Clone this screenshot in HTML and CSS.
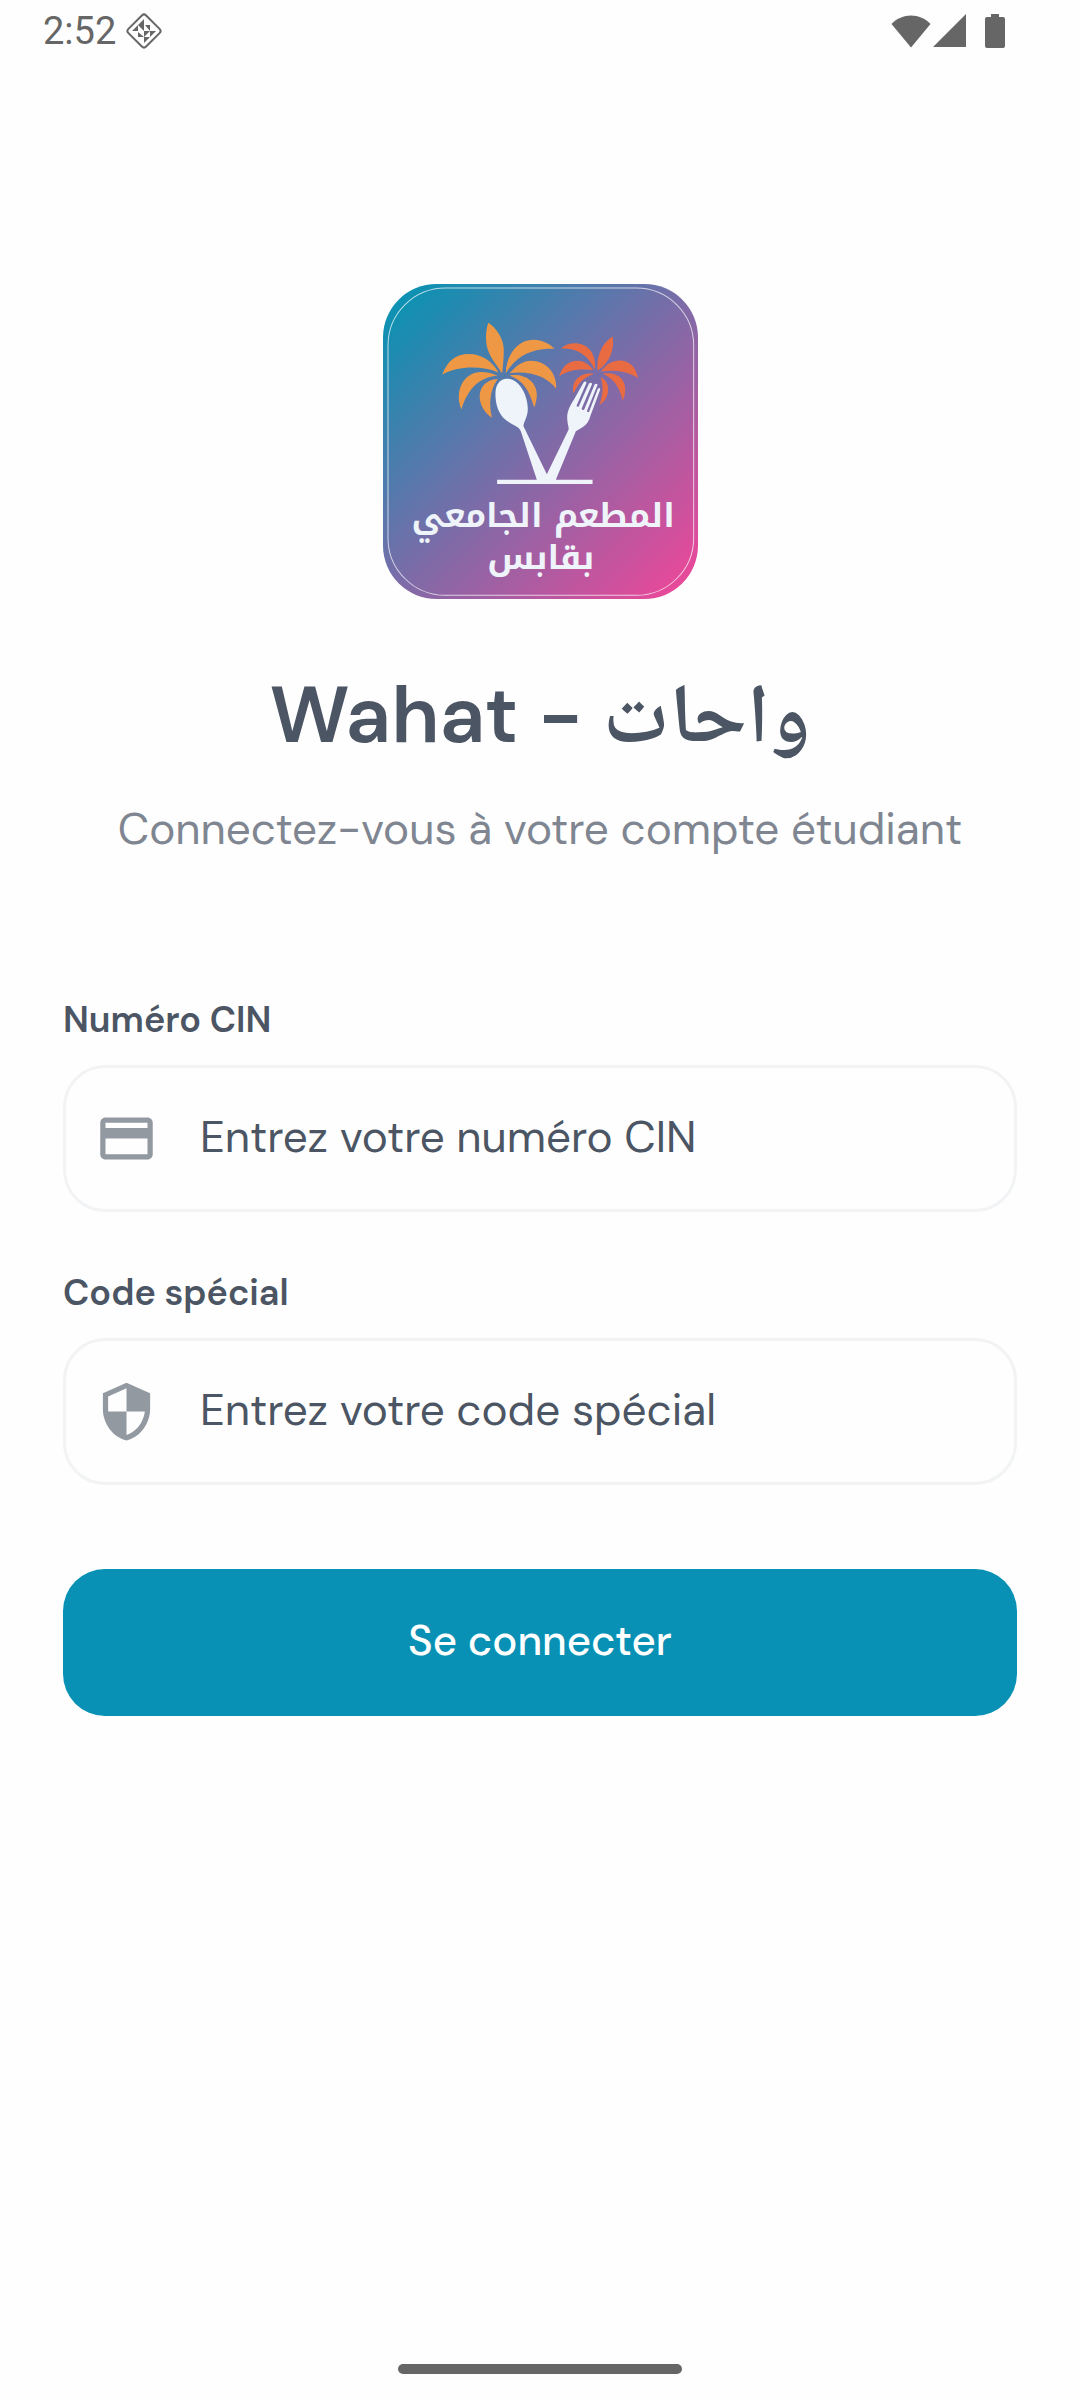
FILE: index.html
```html
<!DOCTYPE html>
<html lang="fr">
<head>
<meta charset="utf-8">
<meta name="viewport" content="width=device-width, initial-scale=1">
<title>Wahat</title>
<link rel="stylesheet" href="styles.css">
</head>
<body>
<div class="screen">
  <header class="status">
    <div class="status-group">
      <span class="time">2:52</span>
      <svg class="diamond" viewBox="0 0 38 38" aria-hidden="true">
        <rect x="6.500" y="6.500" width="25" height="25" rx="3" transform="rotate(45 19 19)" fill="none" stroke="currentColor" stroke-width="2"/>
        <path fill="currentColor" d="M19 7v6h-6zM20 13h5v6zM13 13v6H7zM13 13h6v6zM13 20l6 5h-6zM19 19h6l-6 6zM25 19h6l-6 6zM19 25h6l-6 6z"/>
      </svg>
    </div>
    <div class="status-group">
      <svg class="wifi" viewBox="0 0 40 34" aria-hidden="true"><path fill="currentColor" d="M20 33.500 0.500 10C11-1.500 29-1.500 39.500 10z"/></svg>
      <svg class="signal" viewBox="0 0 34 34" aria-hidden="true"><path fill="currentColor" d="M33 0v33H0z"/></svg>
      <svg class="battery" viewBox="0 0 20 34" aria-hidden="true"><path fill="currentColor" d="M6 0h8v3h4q2 0 2 2v27q0 2-2 2H2q-2 0-2-2V5q0-2 2-2h4z"/></svg>
    </div>
  </header>

  <main class="login">
    <svg class="logo" viewBox="37 41 944 944" role="img" aria-label="المطعم الجامعي بقابس">
      <defs>
        <linearGradient id="brand" x1="0" y1="0" x2="1" y2="1">
          <stop offset="0.060" stop-color="#0e91b2"/>
          <stop offset="0.500" stop-color="#7b6ca8"/>
          <stop offset="0.960" stop-color="#ea4899"/>
        </linearGradient>
      </defs>
      <rect x="37" y="41" width="944" height="944" rx="160" fill="url(#brand)"/>
      <rect x="52" y="53" width="916" height="921" rx="172" fill="none" stroke="#fff" stroke-opacity=".7" stroke-width="3"/>
      <g transform="translate(151 120)">
        <g fill="#ee9845">
          <path d="M202 37C225 52 249 86 248 120C248 145 245 170 243 189C225 160 195 130 195 88C194 65 198 45 202 37Z"/>
          <path d="M254 189C255 135 288 88 336 88C365 88 388 102 400 115C350 113 290 125 254 189Z"/>
          <path d="M266 188C290 160 310 151 330 151C372 151 408 185 405 235C380 202 335 180 266 188Z"/>
          <path d="M265 195C310 188 347 213 347 253C347 268 343 282 339 291C325 240 305 208 265 195Z"/>
          <path d="M63 193C80 150 105 131 143 131C180 131 212 150 232 186C185 166 110 165 63 193Z"/>
          <path d="M121 297C98 240 130 185 180 185C200 185 215 190 229 196C175 200 140 235 121 297Z"/>
          <path d="M213 322C162 290 160 210 230 206C205 240 203 285 213 322Z"/>
        </g>
        <g fill="#e96b42">
          <path d="M575 78C578 120 568 152 529 181C525 145 538 98 575 78Z"/>
          <path d="M419 114C455 82 530 98 521 179C503 135 470 113 419 114Z"/>
          <path d="M414 198C430 140 490 138 516 179C480 175 440 178 414 198Z"/>
          <path d="M457 249C448 205 485 184 518 190C485 203 470 220 457 249Z"/>
          <path d="M540 183C570 135 640 138 650 203C620 182 580 178 540 183Z"/>
          <path d="M544 190C595 182 627 215 605 271C595 232 580 205 544 190Z"/>
          <path d="M538 201C570 212 568 265 535 283C545 255 548 225 538 201Z"/>
        </g>
        <path fill="#eef4f9" d="M257 205C295 205 320 255 320 295C320 320 307 335 307 347L377 491L442 358C444 350 438 340 438 320C438 300 450 280 458 268L487 216Q493 210 496 217L466 286Q469 291 473 287L503 220Q508 214 513 220L481 295Q485 301 489 297L520 222Q526 217 529 223L497 302Q500 307 504 303L530 235Q535 230 537 237L508 315C500 347 480 352 464 362L404 508H514V520H228V508H347L299 362C292 345 270 345 245 320C228 300 223 275 223 250C223 225 235 205 257 205Z"/>
      </g>
      <g class="logo-text" fill="#eef4f9" text-anchor="middle">
        <text x="517" y="770">المطعم الجامعي</text>
        <text x="510" y="896">بقابس</text>
      </g>
    </svg>

    <h1 class="title">Wahat - <span class="title-ar" lang="ar">واحات</span></h1>
    <p class="subtitle">Connectez-vous à votre compte étudiant</p>

    <form class="form">
      <label class="label" for="cin">Numéro CIN</label>
      <div class="field">
        <svg class="icon" viewBox="0 0 24 24" aria-hidden="true"><path fill="currentColor" d="M20 4H4c-1.110 0-1.990.890-1.990 2L2 18c0 1.110.890 2 2 2h16c1.110 0 2-.890 2-2V6c0-1.110-.890-2-2-2zm0 14H4v-6h16v6zm0-10H4V6h16v2z"/></svg>
        <input class="input" id="cin" type="text" placeholder="Entrez votre numéro CIN">
      </div>
      <label class="label" for="code">Code spécial</label>
      <div class="field">
        <svg class="icon" viewBox="0 0 24 24" aria-hidden="true"><path fill="currentColor" d="M12 1 3 5v6c0 5.550 3.840 10.740 9 12 5.160-1.260 9-6.450 9-12V5l-9-4zm0 10.990h7c-.530 4.120-3.280 7.790-7 8.940V12H5V6.300l7-3.110v8.800z"/></svg>
        <input class="input" id="code" type="text" placeholder="Entrez votre code spécial">
      </div>
      <button class="submit" type="submit">Se connecter</button>
    </form>
  </main>

  <div class="home-bar"></div>
</div>
</body>
</html>
```
FILE: styles.css
```css
* {
  box-sizing: border-box;
}

body {
  margin: 0;
  background: #fefefe;
  color: #4b5563;
  font-family: "DM Sans", Inter, "DejaVu Sans", sans-serif;
}

.screen {
  display: flex;
  flex-direction: column;
  min-height: 100vh;
}

.status {
  display: flex;
  justify-content: space-between;
  align-items: center;
  height: 62px;
  padding: 0 75px 0 43px;
  color: #666;
}

.status-group {
  display: flex;
  align-items: center;
}

.time {
  font: 38px/44px Roboto, sans-serif;
}

.diamond {
  width: 38px;
  height: 38px;
  margin-left: 9px;
}

.wifi {
  width: 40px;
  height: 34px;
}

.signal {
  width: 34px;
  height: 34px;
  margin: 0 18px 0 2px;
}

.battery {
  width: 20px;
  height: 34px;
}

.login {
  display: flex;
  flex: 1;
  flex-direction: column;
  padding: 222px 63px 0;
}

.logo {
  align-self: center;
  width: 315px;
  height: 315px;
}

.logo-text {
  font: bold 100px "Noto Kufi Arabic", "DejaVu Sans", sans-serif;
}

.title {
  height: 112px;
  margin: 60px 0 0;
  font-size: 80px;
  font-weight: 600;
  line-height: 112px;
  text-align: center;
}

.title-ar {
  font-family: "Noto Naskh Arabic", "DejaVu Sans", sans-serif;
  font-size: 84px;
  line-height: 1;
}

.subtitle {
  margin: 26px 0 0;
  color: #7f8691;
  font-size: 44px;
  line-height: 64px;
  text-align: center;
}

.form {
  display: flex;
  flex-direction: column;
  margin-top: 134px;
}

.label {
  margin-bottom: 20px;
  font-size: 36px;
  font-weight: 600;
  line-height: 50px;
}

.field {
  display: flex;
  align-items: center;
  gap: 42px;
  height: 147px;
  margin-bottom: 56px;
  padding: 0 29px;
  border: 3px solid #f2f3f5;
  border-radius: 42px;
}

.icon {
  flex: none;
  width: 63px;
  height: 63px;
  color: #9299a1;
}

.input {
  flex: 1;
  min-width: 0;
  padding: 0 0 4px;
  border: 0;
  outline: 0;
  background: none;
  color: inherit;
  font: inherit;
  font-size: 44px;
  line-height: 64px;
}

.input::placeholder {
  color: #4b5563;
  opacity: 1;
}

.submit {
  height: 147px;
  margin-top: 28px;
  padding: 0 0 4px;
  border: 0;
  border-radius: 42px;
  background: #0891b5;
  color: #fff;
  font: inherit;
  font-size: 42px;
  font-weight: 500;
}

.home-bar {
  align-self: center;
  width: 284px;
  height: 10px;
  margin-bottom: 26px;
  border-radius: 5px;
  background: #666;
}
```
